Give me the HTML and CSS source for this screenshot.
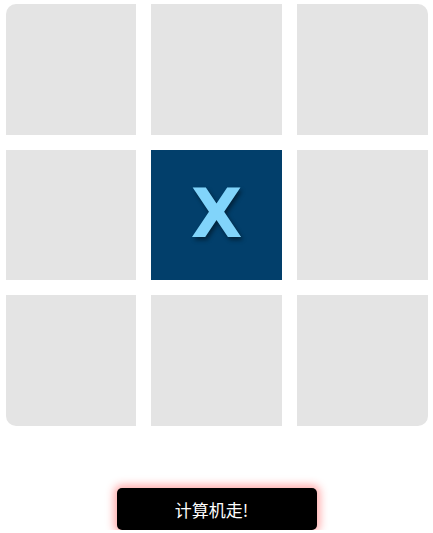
FILE: index.html
```html
<!DOCTYPE html>
<html lang="zh">
<head>
<meta charset="utf-8">
<link rel="stylesheet" href="styles.css">
</head>
<body>
<div class="page">
  <div class="board">
    <div class="cell"></div>
    <div class="cell"></div>
    <div class="cell"></div>
    <div class="cell"></div>
    <div class="cell filled"><span class="mark">X</span></div>
    <div class="cell"></div>
    <div class="cell"></div>
    <div class="cell"></div>
    <div class="cell"></div>
  </div>
  <button class="ai-btn">计算机走!</button>
</div>
</body>
</html>
```
FILE: styles.css
```css
html, body {
  margin: 0;
  padding: 0;
  background: #ffffff;
}
.page {
  display: flex;
  flex-direction: column;
  align-items: center;
  padding-top: 4px;
}
.board {
  width: 422px;
  height: 422px;
  display: grid;
  grid-template-columns: repeat(3, 1fr);
  grid-template-rows: repeat(3, 1fr);
  gap: 15px;
  border-radius: 10px;
  overflow: hidden;
}
.cell {
  background: #e4e4e4;
  display: flex;
  align-items: center;
  justify-content: center;
}
.cell.filled {
  background: #023f6b;
}
.mark {
  font-family: "DejaVu Sans", sans-serif;
  font-weight: 700;
  font-size: 67px;
  line-height: 1;
  color: #81d4fa;
  text-shadow: 2px 3px 4px rgba(0, 0, 0, 0.45);
}
.ai-btn {
  margin-top: 62px;
  width: 200px;
  height: 42px;
  padding: 0 10px 0 0;
  border: none;
  border-radius: 5px;
  background: #000000;
  color: #ffffff;
  font-family: "Noto Sans CJK SC", "Liberation Sans", sans-serif;
  font-size: 17px;
  font-weight: 400;
  box-shadow: 0 0 8px 3px rgba(255, 40, 40, 0.4);
  cursor: pointer;
}
```
